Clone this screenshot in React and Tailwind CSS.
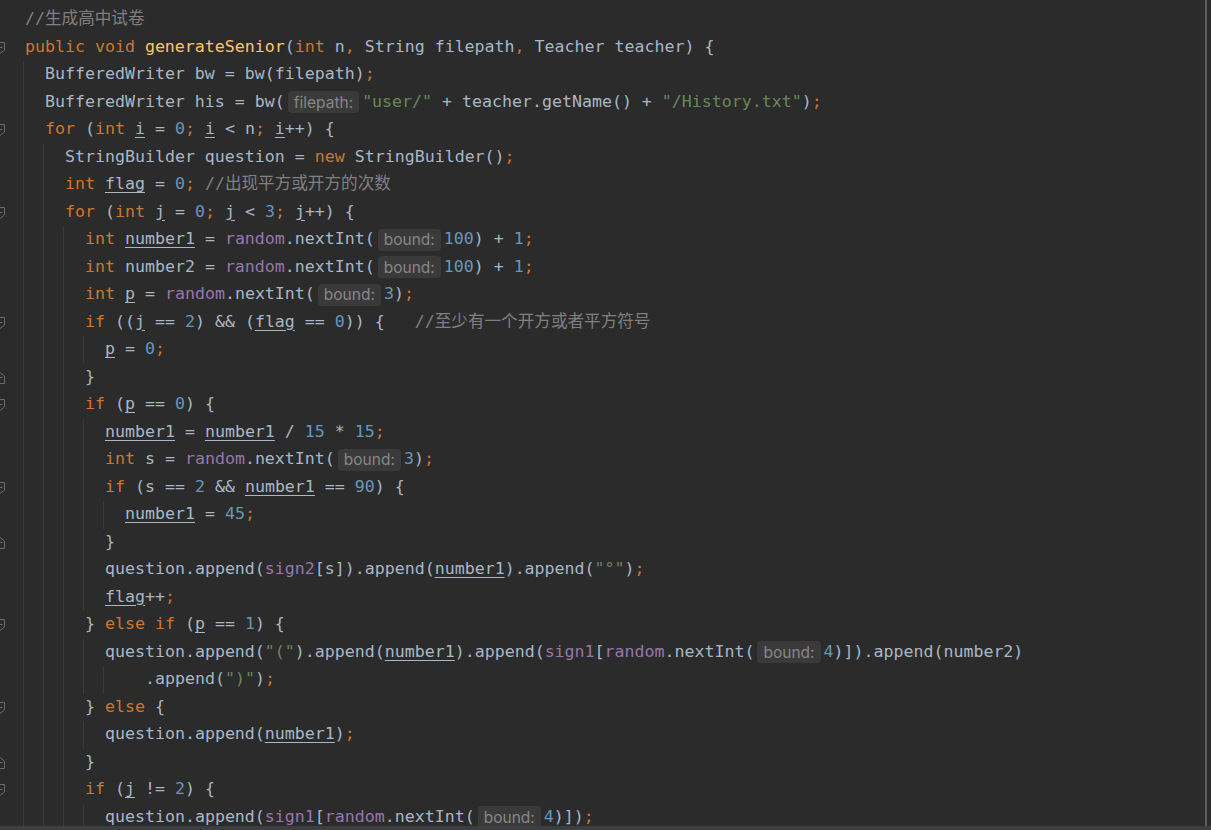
import React from 'react';

// token colours (Darcula-like)
const styles = {
    t: 'text-[#a9b7c6]',
    k: 'text-[#cc7832]',
    p: 'text-[#cc7832]',
    n: 'text-[#6897bb]',
    s: 'text-[#6a8759]',
    c: 'text-[#808080]',
    m: 'text-[#ffc66d]',
    f: 'text-[#9876aa]',
    u: 'text-[#a9b7c6] underline underline-offset-[3px] decoration-[#a9b7c6]',
};

// [indent (chars), fold marker, guides, tokens]
const lines = [
    [0, null, [], [['c', '//生成高中试卷']]],
    [0, 'open', [], [['k', 'public void '], ['m', 'generateSenior'], ['t', '('], ['k', 'int '], ['t', 'n'], ['p', ', '], ['t', 'String filepath'], ['p', ', '], ['t', 'Teacher teacher) {']]],
    [2, null, [0], [['t', 'BufferedWriter bw = bw(filepath)'], ['p', ';']]],
    [2, null, [0], [['t', 'BufferedWriter his = bw('], ['h', 'filepath:'], ['s', '"user/"'], ['t', ' + teacher.getName() + '], ['s', '"/History.txt"'], ['t', ')'], ['p', ';']]],
    [2, 'open', [0], [['k', 'for '], ['t', '('], ['k', 'int '], ['u', 'i'], ['t', ' = '], ['n', '0'], ['p', '; '], ['u', 'i'], ['t', ' < n'], ['p', '; '], ['u', 'i'], ['t', '++) {']]],
    [4, null, [0, 1], [['t', 'StringBuilder question = '], ['k', 'new '], ['t', 'StringBuilder()'], ['p', ';']]],
    [4, null, [0, 1], [['k', 'int '], ['u', 'flag'], ['t', ' = '], ['n', '0'], ['p', ';'], ['c', ' //出现平方或开方的次数']]],
    [4, 'open', [0, 1], [['k', 'for '], ['t', '('], ['k', 'int '], ['u', 'j'], ['t', ' = '], ['n', '0'], ['p', '; '], ['u', 'j'], ['t', ' < '], ['n', '3'], ['p', '; '], ['u', 'j'], ['t', '++) {']]],
    [6, null, [0, 1, 2], [['k', 'int '], ['u', 'number1'], ['t', ' = '], ['f', 'random'], ['t', '.nextInt('], ['h', 'bound:'], ['n', '100'], ['t', ') + '], ['n', '1'], ['p', ';']]],
    [6, null, [0, 1, 2], [['k', 'int '], ['t', 'number2 = '], ['f', 'random'], ['t', '.nextInt('], ['h', 'bound:'], ['n', '100'], ['t', ') + '], ['n', '1'], ['p', ';']]],
    [6, null, [0, 1, 2], [['k', 'int '], ['u', 'p'], ['t', ' = '], ['f', 'random'], ['t', '.nextInt('], ['h', 'bound:'], ['n', '3'], ['t', ')'], ['p', ';']]],
    [6, 'open', [0, 1, 2], [['k', 'if '], ['t', '(('], ['u', 'j'], ['t', ' == '], ['n', '2'], ['t', ') && ('], ['u', 'flag'], ['t', ' == '], ['n', '0'], ['t', ')) {'], ['c', '   //至少有一个开方或者平方符号']]],
    [8, null, [0, 1, 2, 3], [['u', 'p'], ['t', ' = '], ['n', '0'], ['p', ';']]],
    [6, 'close', [0, 1, 2], [['t', '}']]],
    [6, 'open', [0, 1, 2], [['k', 'if '], ['t', '('], ['u', 'p'], ['t', ' == '], ['n', '0'], ['t', ') {']]],
    [8, null, [0, 1, 2, 3], [['u', 'number1'], ['t', ' = '], ['u', 'number1'], ['t', ' / '], ['n', '15'], ['t', ' * '], ['n', '15'], ['p', ';']]],
    [8, null, [0, 1, 2, 3], [['k', 'int '], ['t', 's = '], ['f', 'random'], ['t', '.nextInt('], ['h', 'bound:'], ['n', '3'], ['t', ')'], ['p', ';']]],
    [8, 'open', [0, 1, 2, 3], [['k', 'if '], ['t', '(s == '], ['n', '2'], ['t', ' && '], ['u', 'number1'], ['t', ' == '], ['n', '90'], ['t', ') {']]],
    [10, null, [0, 1, 2, 3, 4], [['u', 'number1'], ['t', ' = '], ['n', '45'], ['p', ';']]],
    [8, 'close', [0, 1, 2, 3], [['t', '}']]],
    [8, null, [0, 1, 2, 3], [['t', 'question.append('], ['f', 'sign2'], ['t', '[s]).append('], ['u', 'number1'], ['t', ').append('], ['s', '"°"'], ['t', ')'], ['p', ';']]],
    [8, null, [0, 1, 2, 3], [['u', 'flag'], ['t', '++'], ['p', ';']]],
    [6, 'open', [0, 1, 2], [['t', '} '], ['k', 'else if '], ['t', '('], ['u', 'p'], ['t', ' == '], ['n', '1'], ['t', ') {']]],
    [8, null, [0, 1, 2, 3], [['t', 'question.append('], ['s', '"("'], ['t', ').append('], ['u', 'number1'], ['t', ').append('], ['f', 'sign1'], ['t', '['], ['f', 'random'], ['t', '.nextInt('], ['h', 'bound:'], ['n', '4'], ['t', ')]).append(number2)']]],
    [12, null, [0, 1, 2, 3, 4], [['t', '.append('], ['s', '")"'], ['t', ')'], ['p', ';']]],
    [6, 'open', [0, 1, 2], [['t', '} '], ['k', 'else '], ['t', '{']]],
    [8, null, [0, 1, 2, 3], [['t', 'question.append('], ['u', 'number1'], ['t', ')'], ['p', ';']]],
    [6, 'close', [0, 1, 2], [['t', '}']]],
    [6, 'open', [0, 1, 2], [['k', 'if '], ['t', '('], ['u', 'j'], ['t', ' != '], ['n', '2'], ['t', ') {']]],
    [8, null, [0, 1, 2, 3], [['t', 'question.append('], ['f', 'sign1'], ['t', '['], ['f', 'random'], ['t', '.nextInt('], ['h', 'bound:'], ['n', '4'], ['t', ')])'], ['p', ';']]],
];

const guideLeft = ['left-[23px]', 'left-[43px]', 'left-[63px]', 'left-[83px]', 'left-[103px]'];
const indentWidth = {
    0: 'w-0', 2: 'w-[20px]', 4: 'w-[40px]', 6: 'w-[60px]', 8: 'w-[80px]', 10: 'w-[100px]', 12: 'w-[120px]',
};

function FoldMark({ kind }) {
    if (!kind) return null;
    return (
        <svg width="12" height="14" viewBox="0 0 12 14" className="absolute -left-[6px] top-[7px]">
            {kind === 'open' ? (
                <path d="M1.5 1.5h9v7.5l-4.5 3.5-4.5-3.5z" fill="none" stroke="#6b6b6b" strokeWidth="1" />
            ) : (
                <path d="M1.5 12.5h9V5L6 1.5 1.5 5z" fill="none" stroke="#6b6b6b" strokeWidth="1" />
            )}
            <path d="M3.5 6.5h5" stroke="#6b6b6b" strokeWidth="1" />
        </svg>
    );
}

function Hint({ text }) {
    return (
        <span
            className="mx-[3px] inline-flex h-[22px] items-center rounded-[4px] bg-[#3a3a3a] px-[6px] text-[15.5px] text-[#878787]"
            style={{ fontFamily: 'Inter, "Noto Sans", sans-serif' }}
        >
            {text}
        </span>
    );
}

function CodeLine({ indent, fold, guides, tokens }) {
    return (
        <div className="relative flex h-[27.5px] items-center whitespace-pre pl-[25px]">
            <FoldMark kind={fold} />
            {guides.map((g) => (
                <div key={g} className={`absolute top-0 h-full w-px bg-[#393939] ${guideLeft[g]}`} />
            ))}
            <span className={`inline-block shrink-0 ${indentWidth[indent]}`} />
            {tokens.map(([kind, text], i) =>
                kind === 'h' ? (
                    <Hint key={i} text={text} />
                ) : (
                    <span key={i} className={styles[kind]}>{text}</span>
                )
            )}
        </div>
    );
}

export default function App() {
    return (
        <div
            className="flex h-[830px] w-[1211px] flex-col overflow-hidden bg-[#2b2b2b] text-[16.6px]"
            style={{ fontFamily: '"DejaVu Sans Mono", "Noto Sans CJK SC", monospace' }}
        >
            <div className="flex min-h-0 flex-1">
                <div className="min-w-0 flex-1 overflow-hidden pt-[6px]">
                    {lines.map(([indent, fold, guides, tokens], i) => (
                        <CodeLine key={i} indent={indent} fold={fold} guides={guides} tokens={tokens} />
                    ))}
                </div>
                <div className="w-[2px] bg-[#5c5c5c]" />
                <div className="w-[4px]" />
            </div>
            <div className="h-[4px] bg-[#3c3f41]" />
        </div>
    );
}
